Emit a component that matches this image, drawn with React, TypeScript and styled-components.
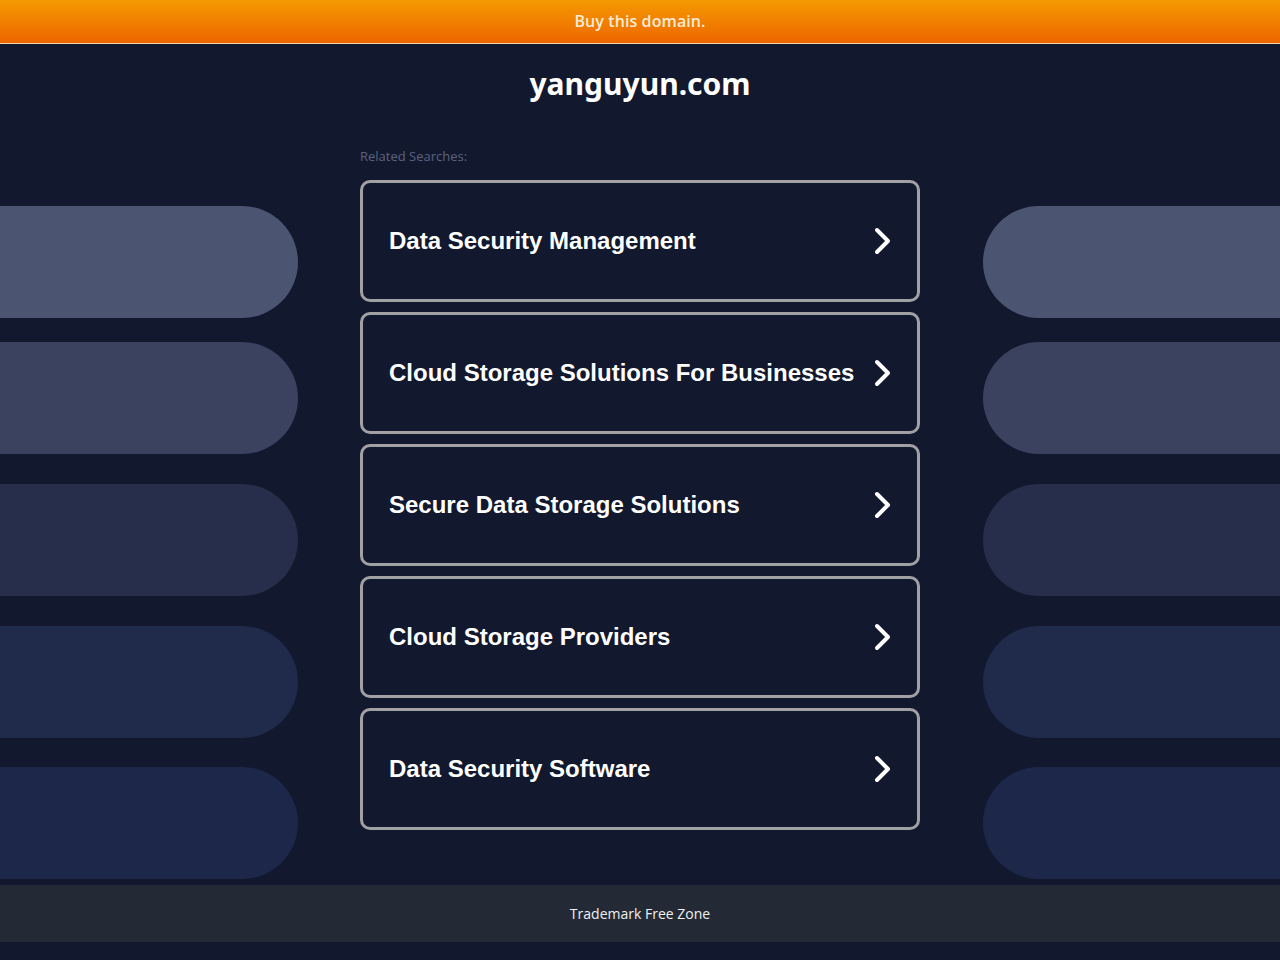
import React from "react";
import styled, { createGlobalStyle } from "styled-components";

const Global = createGlobalStyle`
  html, body { margin: 0; padding: 0; background: #12182e; }
  body { font-family: "Liberation Sans", Arial, sans-serif; }
`;

const Page = styled.div`
  width: 1280px;
  min-height: 960px;
  background: #12182e;
  display: flex;
  flex-direction: column;
`;

const TopBar = styled.a`
  display: flex;
  align-items: center;
  justify-content: center;
  height: 42px;
  padding-bottom: 1px;
  background: linear-gradient(to bottom, #f49a00, #ee6600);
  border-bottom: 1px solid #f0d2b0;
  color: #fbecd6;
  font-family: "Open Sans", "Noto Sans", sans-serif;
  font-weight: 600;
  font-size: 16px;
  letter-spacing: 0.1px;
  text-decoration: none;
`;

const Title = styled.h1`
  margin: 0;
  padding-top: 22px;
  height: 52px;
  text-align: center;
  color: #ffffff;
  font-family: "Noto Sans", "Open Sans", sans-serif;
  font-weight: 700;
  font-size: 30px;
  line-height: 36px;
`;

const Middle = styled.div`
  display: flex;
  margin-top: 28px;
`;

const SideColumn = styled.div<{ $side: "left" | "right" }>`
  width: ${(p) => (p.$side === "left" ? "298px" : "297px")};
  margin-left: ${(p) => (p.$side === "right" ? "63px" : "0")};
  margin-right: ${(p) => (p.$side === "left" ? "62px" : "0")};
  padding-top: 60px;
  display: flex;
  flex-direction: column;
`;

const Pill = styled.div<{ $side: "left" | "right"; $color: string; $gap: number }>`
  height: 112px;
  margin-top: ${(p) => p.$gap}px;
  background: ${(p) => p.$color};
  border-radius: ${(p) => (p.$side === "left" ? "0 56px 56px 0" : "56px 0 0 56px")};
`;

const Center = styled.div`
  width: 560px;
  display: flex;
  flex-direction: column;
`;

const Label = styled.div`
  font-family: "Open Sans", "Noto Sans", sans-serif;
  font-size: 13px;
  line-height: 20px;
  color: #5b637f;
  height: 20px;
  margin-bottom: 14px;
`;

const Cards = styled.div`
  display: flex;
  flex-direction: column;
  gap: 10px;
`;

const Card = styled.a`
  box-sizing: border-box;
  height: 122px;
  border: 3px solid #a1a1a4;
  border-radius: 10px;
  display: flex;
  align-items: center;
  justify-content: space-between;
  padding: 0 24px 0 26px;
  color: #ffffff;
  text-decoration: none;
  font-family: "Liberation Sans", Arial, sans-serif;
  font-weight: 700;
  font-size: 24px;
`;

const Chevron = () => (
  <svg width="20" height="30" viewBox="0 0 20 30" aria-hidden="true">
    <path d="M4 4 L15 15 L4 26" fill="none" stroke="#ffffff" strokeWidth="4" strokeLinecap="round" strokeLinejoin="round" />
  </svg>
);

const Footer = styled.div`
  margin-top: 6px;
  height: 57px;
  background: #232a35;
  display: flex;
  align-items: center;
  justify-content: center;
  color: #eef0f2;
  font-family: "Open Sans", "Noto Sans", sans-serif;
  font-size: 14px;
`;

const pillColors = ["#4b5572", "#3a4260", "#262e4b", "#202a4b", "#1d2749"];
const pillGaps = [0, 24, 30, 30, 29];
const searches = [
  "Data Security Management",
  "Cloud Storage Solutions For Businesses",
  "Secure Data Storage Solutions",
  "Cloud Storage Providers",
  "Data Security Software",
];

export default function App() {
  return (
    <Page>
      <Global />
      <TopBar href="#">Buy this domain.</TopBar>
      <Title>yanguyun.com</Title>
      <Middle>
        <SideColumn $side="left">
          {pillColors.map((c, i) => (
            <Pill key={i} $side="left" $color={c} $gap={pillGaps[i]} />
          ))}
        </SideColumn>
        <Center>
          <Label>Related Searches:</Label>
          <Cards>
            {searches.map((s) => (
              <Card key={s} href="#">
                <span>{s}</span>
                <Chevron />
              </Card>
            ))}
          </Cards>
        </Center>
        <SideColumn $side="right">
          {pillColors.map((c, i) => (
            <Pill key={i} $side="right" $color={c} $gap={pillGaps[i]} />
          ))}
        </SideColumn>
      </Middle>
      <Footer>Trademark Free Zone</Footer>
    </Page>
  );
}
